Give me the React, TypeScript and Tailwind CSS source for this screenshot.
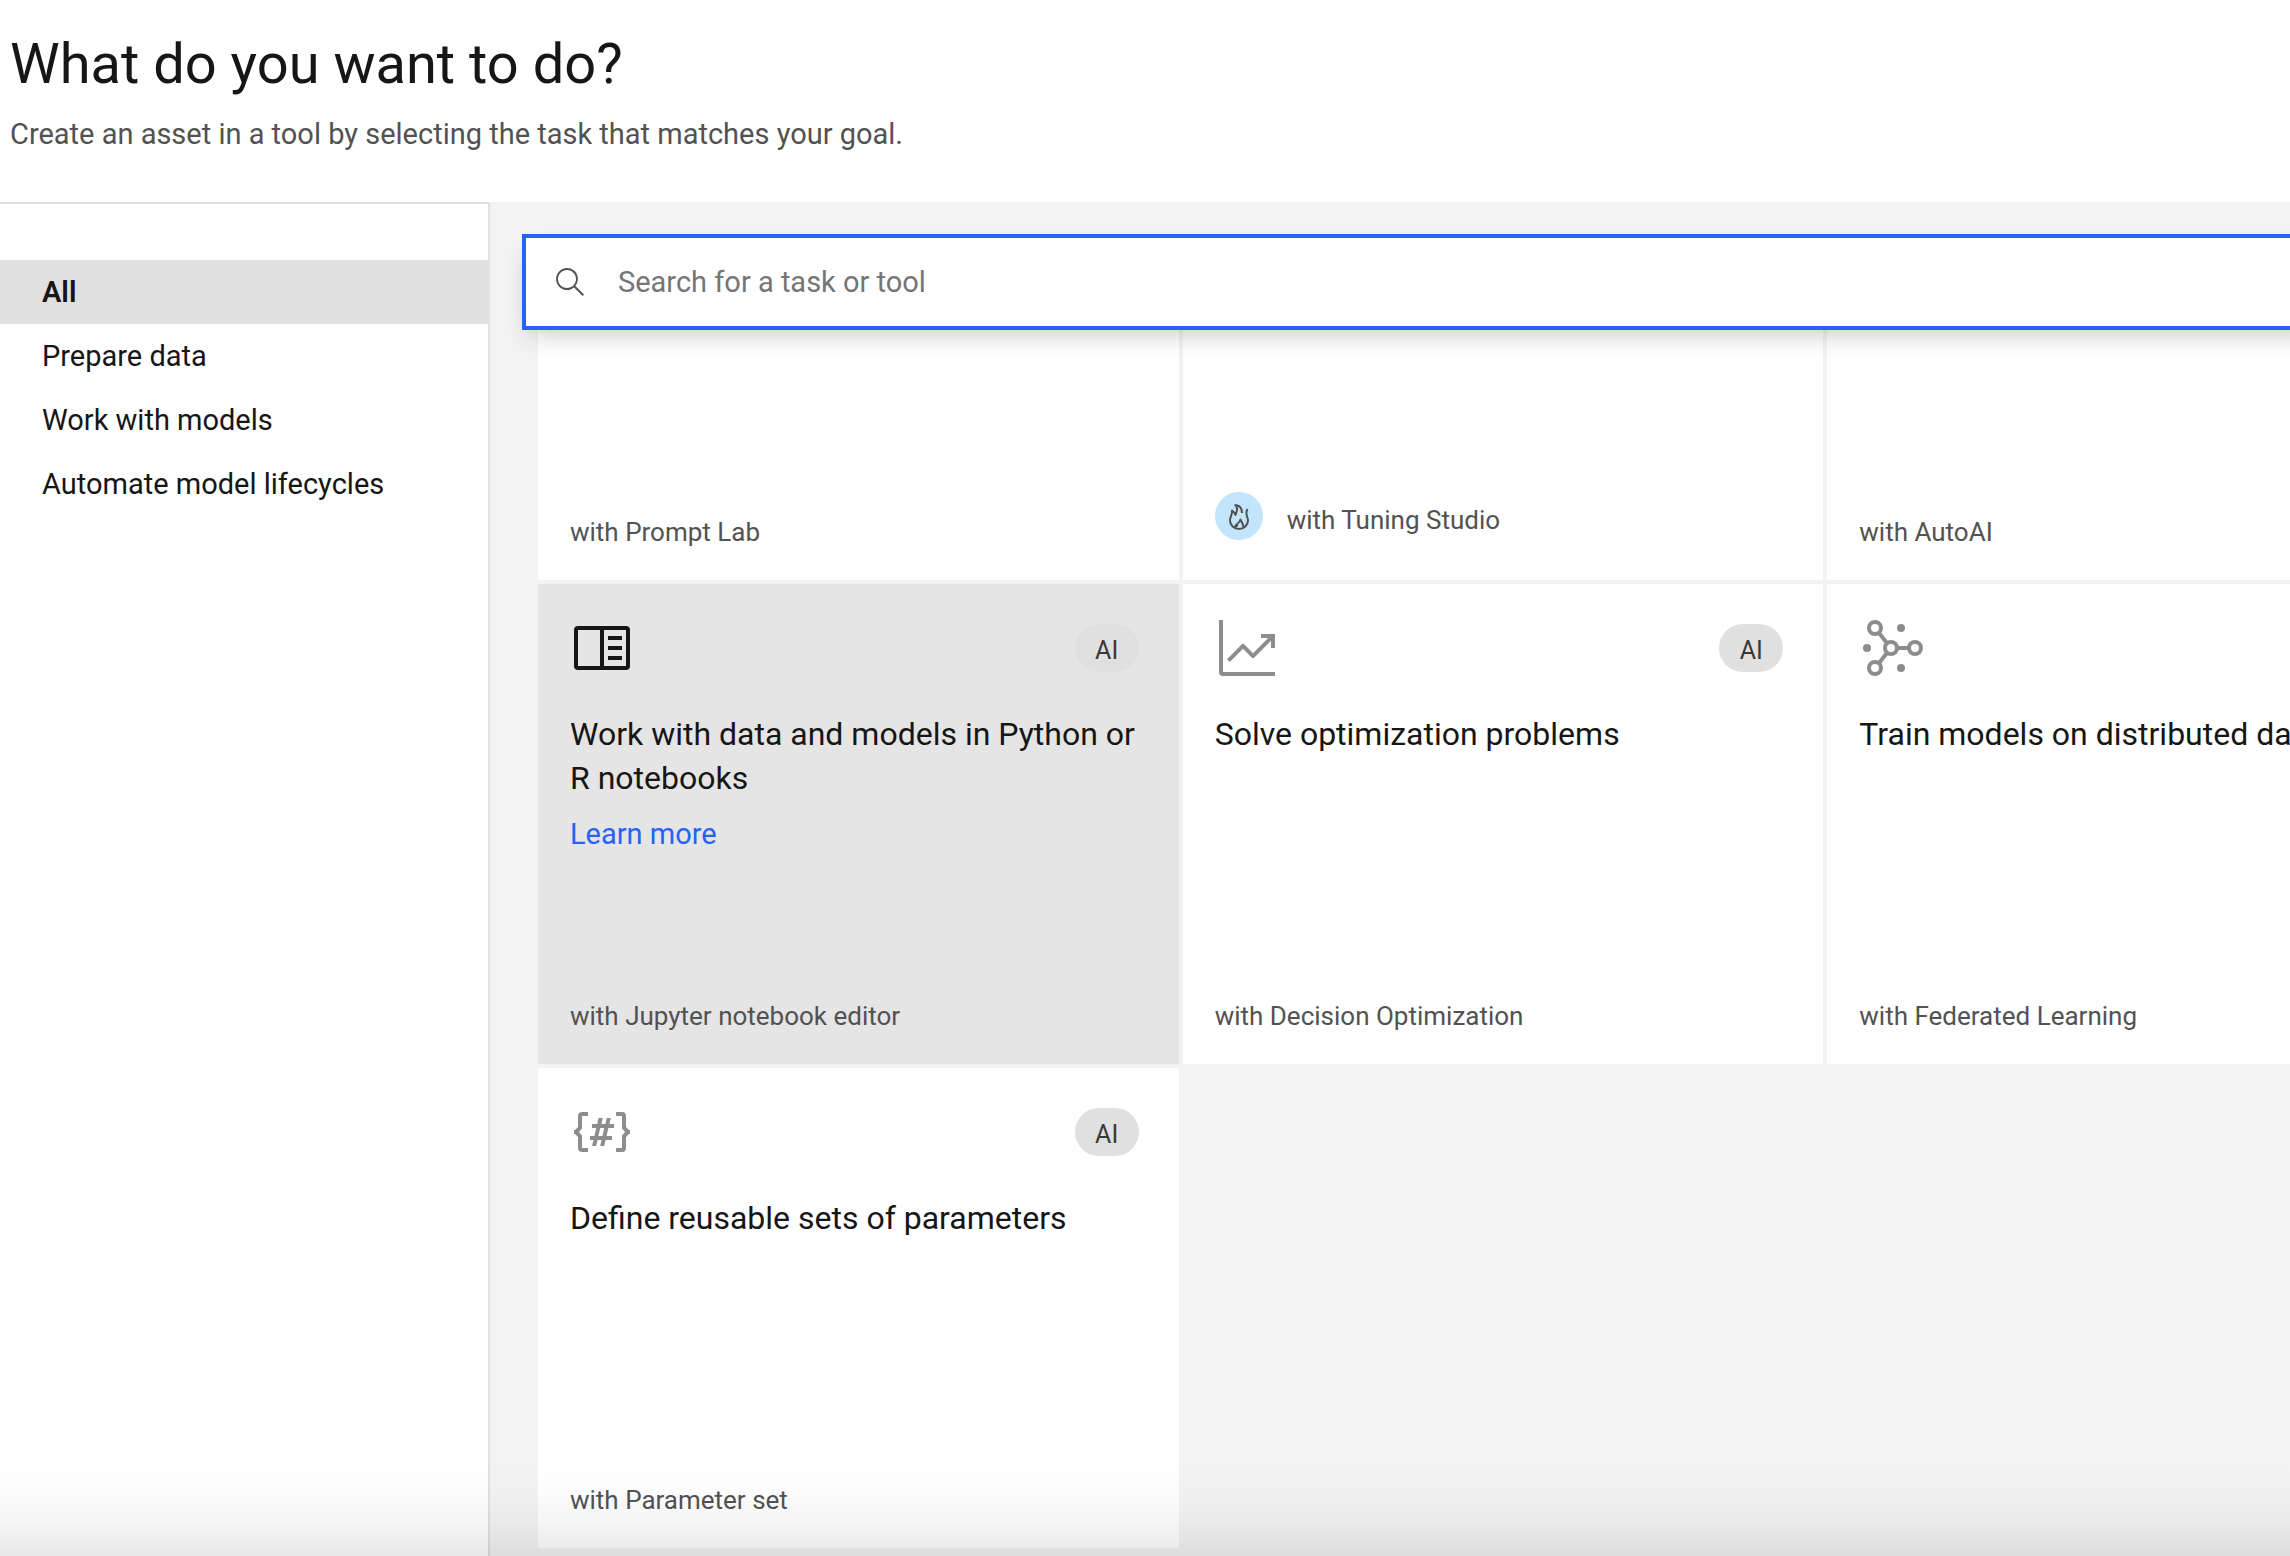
import type { ReactNode } from 'react';

const SearchIcon = () => (
  <svg viewBox="0 0 16 16" className="size-8 shrink-0 fill-[#525252]" aria-hidden="true">
    <path d="M15,14.3L10.7,10c1.9-2.3,1.6-5.8-0.7-7.7S4.2,0.7,2.3,3S0.7,8.8,3,10.7c2,1.7,5,1.7,7,0l4.3,4.3L15,14.3z M2,6.5C2,4,4,2,6.5,2S11,4,11,6.5S9,11,6.5,11S2,9,2,6.5z" />
  </svg>
);

const NotebookIcon = () => (
  <svg viewBox="0 0 32 32" className="size-16" fill="none" stroke="currentColor" strokeWidth="2" aria-hidden="true">
    <rect x="3" y="6" width="26" height="20" rx="1" />
    <path d="M16 6V26M19 11H26M19 16H26M19 21H26" />
  </svg>
);

const ChartIcon = () => (
  <svg viewBox="0 0 32 32" className="size-16" fill="currentColor" aria-hidden="true">
    <path d="M4,2H2V28a2,2,0,0,0,2,2H30V28H4Z" />
    <path d="M30,9H23v2h3.59L19,18.59l-4.29-4.3a1,1,0,0,0-1.42,0L6,21.59,7.41,23,14,16.41l4.29,4.3a1,1,0,0,0,1.42,0L28,12.41V16h2Z" />
  </svg>
);

const NetworkIcon = () => (
  <svg viewBox="0 0 32 32" className="size-16" fill="none" stroke="currentColor" strokeWidth="2" aria-hidden="true">
    <circle cx="8" cy="6" r="3" />
    <circle cx="8" cy="26" r="3" />
    <circle cx="16" cy="16" r="3" />
    <circle cx="28" cy="16" r="3" />
    <path d="M9.9 8.3L14.1 13.7M9.9 23.7L14.1 18.3M19 16H25" />
    <g fill="currentColor" stroke="none">
      <circle cx="4" cy="16" r="2" />
      <circle cx="21" cy="6" r="2" />
      <circle cx="21" cy="26" r="2" />
    </g>
  </svg>
);

const ParameterIcon = () => (
  <svg viewBox="0 0 32 32" className="size-16" fill="currentColor" aria-hidden="true">
    <path d="M9 26H6a2 2 0 0 1-2-2v-5.500L2.500 17H2v-2h.5L4 13.500V8a2 2 0 0 1 2-2h3v2H6v6.200L4.500 16 6 17.800V24h3Z" />
    <path d="M23 26h3a2 2 0 0 0 2-2v-5.500l1.500-1.500H30v-2h-.5L28 13.500V8a2 2 0 0 0-2-2h-3v2h3v6.200l1.500 1.800-1.500 1.800V24h-3Z" />
    <path d="M22 14v-2h-2.300l.7-3h-2l-.7 3h-2l.7-3h-2.100l-.7 3H11v2h2.100l-.9 4H10v2h1.700l-.7 3h2.100l.7-3h2l-.7 3h2l.7-3H21v-2h-2.700l.9-4Zm-5.800 4h-2l.9-4h2Z" />
  </svg>
);

const FlameIcon = () => (
  <svg viewBox="0 0 32 32" className="size-8" fill="none" stroke="#525252" strokeWidth="2" strokeLinejoin="round" aria-hidden="true">
    <path d="M11.500 5C16.500 5 19 7.500 19 13M12 5C15.500 8 14 11 12.500 15C12 13 10.500 11.500 9 10.500C9.500 14.500 7 16.500 7 20.500A9 8.500 0 0 0 25 20.500C25 17 21.500 14 24.500 9" />
    <path d="M11.500 27.500C12 24 16.500 24 17.500 19.500C18.500 22 20.500 24 20.500 27.500M12 27.500L15 24.500" />
  </svg>
);

const navItems = ['All', 'Prepare data', 'Work with models', 'Automate model lifecycles'];

type Task = {
  title?: string;
  tool: string;
  icon?: ReactNode;
  toolIcon?: ReactNode;
  active?: boolean;
};

const tasks: Task[] = [
  { tool: 'with Prompt Lab' },
  { tool: 'with Tuning Studio', toolIcon: <FlameIcon /> },
  { tool: 'with AutoAI' },
  {
    title: 'Work with data and models in Python or R notebooks',
    tool: 'with Jupyter notebook editor',
    icon: <NotebookIcon />,
    active: true,
  },
  { title: 'Solve optimization problems', tool: 'with Decision Optimization', icon: <ChartIcon /> },
  { title: 'Train models on distributed data', tool: 'with Federated Learning', icon: <NetworkIcon /> },
  { title: 'Define reusable sets of parameters', tool: 'with Parameter set', icon: <ParameterIcon /> },
];

function TaskCard({ title, tool, icon, toolIcon, active }: Task) {
  return (
    <article className={`flex flex-col justify-between p-8 ${active ? 'bg-[#e5e5e5]' : 'bg-white'}`}>
      <div>
        {title && (
          <>
            <div className="flex items-center justify-between pr-2">
              <span className={active ? 'text-[#161616]' : 'text-[#8d8d8d]'}>{icon}</span>
              <span className="flex h-12 w-16 items-center justify-center rounded-full bg-[#e0e0e0] pt-1.5 text-[25px] leading-8 text-[#393939]">
                AI
              </span>
            </div>
            <h2 className="-mr-2 mt-8 text-[32px] leading-[44px] text-[#161616]">{title}</h2>
          </>
        )}
        {active && (
          <a href="#learn-more" className="mt-3.5 inline-block text-[29px] leading-10 text-[#2962f6]">
            Learn more
          </a>
        )}
      </div>
      {toolIcon ? (
        <div className="flex items-center gap-6 pb-2">
          <span className="flex size-12 items-center justify-center rounded-full bg-[#c2e5fc]">{toolIcon}</span>
          <p className="pt-2 text-[26px] leading-8 text-[#525252]">{tool}</p>
        </div>
      ) : (
        <p className="text-[26px] leading-8 text-[#525252]">{tool}</p>
      )}
    </article>
  );
}

export default function App() {
  return (
    <div className="relative flex min-h-screen flex-col overflow-hidden bg-white font-['Roboto',sans-serif] text-[#161616]">
      <header className="px-[10px] pb-12 pt-8">
        <h1 className="text-[56px] leading-[64px]">What do you want to do?</h1>
        <p className="mt-[18px] text-[29px] leading-10 text-[#525252]">
          Create an asset in a tool by selecting the task that matches your goal.
        </p>
      </header>

      <div className="flex flex-1">
        <nav className="w-[490px] shrink-0 border-r-2 border-t-2 border-[#e0e0e0] pt-14" aria-label="Task categories">
          {navItems.map((item, i) => (
            <button
              key={item}
              type="button"
              className={`block h-16 w-full px-[42px] pt-0.5 text-left text-[29px] ${i === 0 ? 'bg-[#e0e0e0] font-semibold' : ''}`}
            >
              {item}
            </button>
          ))}
        </nav>

        <main className="min-w-0 flex-1 overflow-hidden bg-[#f3f3f3] pb-2 pl-8 pt-8">
          <label className="relative z-10 -mr-8 flex h-24 items-center gap-8 border-4 border-[#2962f6] bg-white pl-7 shadow-[0_12px_24px_-8px_rgba(0,0,0,0.22)]">
            <SearchIcon />
            <input
              type="search"
              aria-label="Search for a task or tool"
              placeholder="Search for a task or tool"
              className="h-full min-w-0 flex-1 bg-transparent text-[29px] outline-none placeholder:text-[#757575]"
            />
          </label>
          <div className="ml-4 grid w-[1930px] grid-cols-3 grid-rows-[250px_480px_480px] gap-1">
            {tasks.map((task) => (
              <TaskCard key={task.tool} {...task} />
            ))}
          </div>
        </main>
      </div>

      <div className="pointer-events-none absolute inset-x-0 bottom-0 z-20 h-24 bg-[linear-gradient(to_top,rgba(0,0,0,0.09),rgba(0,0,0,0.04)_35%,rgba(0,0,0,0.01)_65%,transparent)]" />
    </div>
  );
}
